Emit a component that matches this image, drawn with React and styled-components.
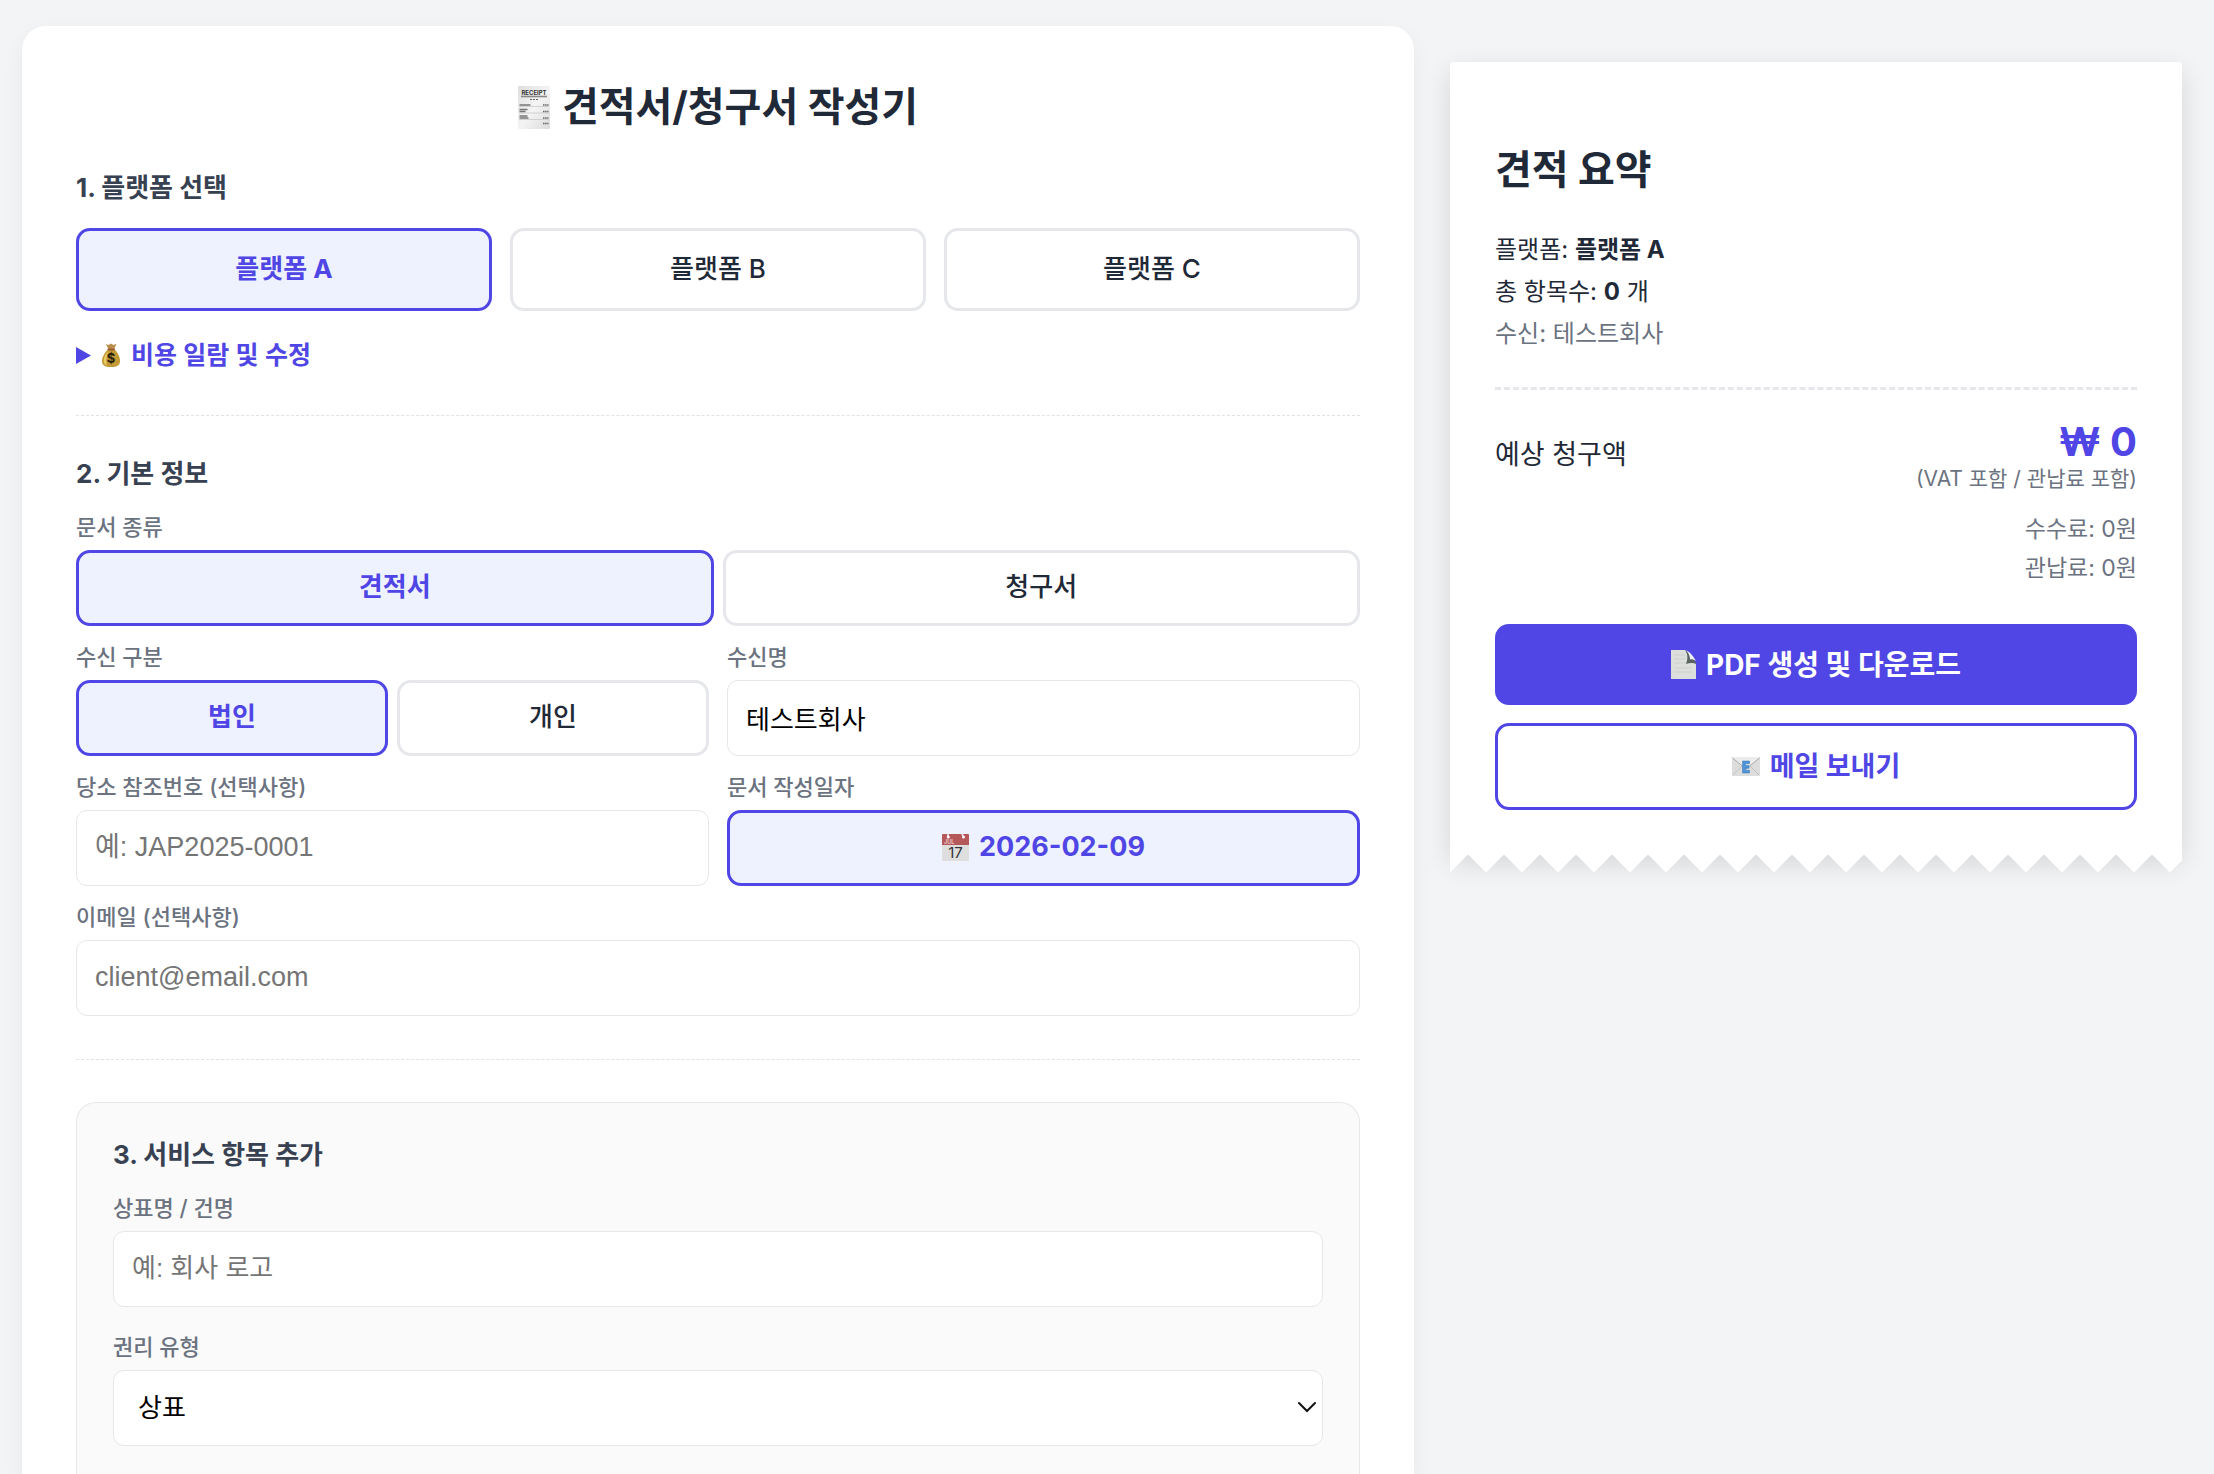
import React, { useState } from 'react'
import styled, { createGlobalStyle } from 'styled-components'

const GlobalStyle = createGlobalStyle`
    * {
        box-sizing: border-box;
    }
    body {
        margin: 0;
        background-color: #f3f4f6;
        color: #1f2937;
        font-family: Inter, "Noto Sans CJK KR", sans-serif;
    }
    button, input, select {
        font-family: inherit;
        margin: 0;
    }
`
const Page = styled.div`
    min-height: 100vh;
    padding: 26px 32px 0 22px;
    display: grid;
    grid-template-columns: minmax(0, 116fr) minmax(0, 61fr);
    gap: 36px;
`
const Card = styled.main`
    display: flex;
    flex-direction: column;
    padding: 54px 54px 0;
    background-color: white;
    border-radius: 24px 24px 0 0;
    box-shadow: 0 7px 22px rgba(0, 0, 0, 0.05);
`
const Title = styled.h1`
    display: flex;
    align-items: center;
    justify-content: center;
    gap: 12px;
    margin: 0 0 38px;
    font-size: 40px;
    line-height: 54px;
    font-weight: 700;
`
const Section = styled.section`
    display: flex;
    flex-direction: column;
`
const SectionTitle = styled.h2`
    margin: 0 0 24px;
    font-size: 26px;
    line-height: 32px;
    font-weight: 700;
    color: #374151;
`
const Divider = styled.hr`
    width: 100%;
    margin: 43px 0 42px;
    border: none;
    border-top: 1px dashed #e0e2e6;
`
const Row = styled.div`
    display: grid;
    grid-template-columns: repeat(${props => props.$cols}, minmax(0, 1fr));
    gap: ${props => props.$gap || 18}px;
`
const Stack = styled.div`
    display: flex;
    flex-direction: column;
    gap: ${props => props.$gap || 18}px;
`
const Field = styled.div`
    display: flex;
    flex-direction: column;
    gap: 9px;
`
const Label = styled.label`
    font-size: 22px;
    line-height: 27px;
    font-weight: 500;
    color: #6b7280;
`
const Option = styled.button`
    display: flex;
    align-items: center;
    justify-content: center;
    gap: 10px;
    height: ${props => (props.$tall ? 83 : 76)}px;
    padding: 0 18px 2px;
    border: 3px solid ${props => (props.$active ? "#4f46e5" : "#e5e7eb")};
    border-radius: 14px;
    background-color: ${props => (props.$active ? "#eef2ff" : "white")};
    color: ${props => (props.$active ? "#4f46e5" : "#1f2937")};
    font-size: ${props => (props.$date ? 27 : 26)}px;
    line-height: 32px;
    font-weight: ${props => (props.$active ? 700 : 500)};
    cursor: pointer;
`
const Input = styled.input`
    width: 100%;
    height: 76px;
    padding: 0 18px 2px;
    border: 1px solid #e5e7eb;
    border-radius: 11px;
    background-color: white;
    color: black;
    font-family: "Liberation Sans", "Noto Sans CJK KR", sans-serif;
    font-size: ${props => (props.$latin ? 27 : 26)}px;

    &::placeholder {
        color: #757575;
    }
`
const SelectBox = styled.div`
    position: relative;
`
const Select = styled.select`
    appearance: none;
    width: 100%;
    height: 76px;
    padding: 0 36px 2px 24px;
    border: 1px solid #e5e7eb;
    border-radius: 11px;
    background-color: white;
    color: black;
    font-size: 26px;
`
const Chevron = styled.svg`
    position: absolute;
    right: 7px;
    top: 31px;
    pointer-events: none;
`
const Costs = styled.details`
    margin: 29px 0 2px;
`
const CostsSummary = styled.summary`
    display: flex;
    align-items: center;
    gap: 11px;
    list-style: none;
    font-size: 25px;
    line-height: 30px;
    font-weight: 600;
    color: #4f46e5;
    cursor: pointer;
`
const Panel = styled.section`
    flex: 1;
    padding: 36px;
    border: 1px solid #e5e7eb;
    border-bottom: none;
    border-radius: 20px 20px 0 0;
    background-color: #fafafa;
`
const Receipt = styled.aside`
    position: relative;
    align-self: start;
    margin-top: 36px;
    padding: 82px 45px 45px;
    background-color: white;
    border-radius: 4px 4px 0 0;
    box-shadow: 0 9px 27px rgba(0, 0, 0, 0.12);

    &::after {
        content: "";
        position: absolute;
        left: 0;
        right: 0;
        top: 100%;
        height: 18px;
        background:
            linear-gradient(45deg, transparent 75%, white 75%) 0 0 / 36px 36px,
            linear-gradient(-45deg, transparent 75%, white 75%) 0 0 / 36px 36px;
    }
`
const ReceiptTitle = styled.h2`
    margin: 0 0 33px;
    font-size: 40px;
    line-height: 52px;
    font-weight: 700;
`
const Line = styled.p`
    margin: 0;
    font-size: 24px;
    line-height: 42px;
    color: ${props => (props.$muted ? "#6b7280" : "#1f2937")};
`
const ReceiptDivider = styled.hr`
    margin: 32px 0 28px;
    border: none;
    border-top: 3px dashed #e5e7eb;
`
const TotalRow = styled.div`
    display: flex;
    align-items: center;
    justify-content: space-between;
`
const TotalLabel = styled.span`
    font-size: 27px;
    line-height: 32px;
`
const TotalValue = styled.div`
    text-align: right;
`
const Price = styled.div`
    font-size: 40px;
    line-height: 48px;
    font-weight: 700;
    color: #4f46e5;
`
const Vat = styled.div`
    font-size: 21px;
    line-height: 26px;
    color: #6b7280;
`
const Fees = styled.div`
    margin: 18px 0 36px;
    text-align: right;
    font-size: 23px;
    line-height: 39px;
    color: #6b7280;
`
const Action = styled.button`
    display: flex;
    align-items: center;
    justify-content: center;
    gap: 10px;
    width: 100%;
    height: ${props => (props.$outline ? 87 : 81)}px;
    border: ${props => (props.$outline ? "3px solid #4f46e5" : "none")};
    border-radius: 14px;
    background-color: ${props => (props.$outline ? "white" : "#4f46e5")};
    color: ${props => (props.$outline ? "#4f46e5" : "white")};
    font-size: ${props => (props.$outline ? 27 : 28)}px;
    line-height: 32px;
    font-weight: 700;
    cursor: pointer;
`

const ReceiptIcon = () => (
    <svg width="32" height="43" viewBox="0 0 32 43" aria-hidden="true">
        <defs>
            <linearGradient id="paper" x1="0" y1="0" x2="1" y2="1">
                <stop offset="0" stopColor="#dedede" />
                <stop offset="0.5" stopColor="#f4f4f4" />
                <stop offset="1" stopColor="#dcdcdc" />
            </linearGradient>
        </defs>
        <rect width="32" height="43" rx="1" fill="url(#paper)" />
        <text x="16" y="9" textAnchor="middle" fontSize="6" fontWeight="700" fill="#333">RECEIPT</text>
        <path d="M3 10.5h26" stroke="#888" strokeWidth="1.6" />
        <path d="M12 13.5h8" stroke="#666" strokeDasharray="2 1" />
        <path d="M1 20.5h30M1 27h30M1 33.5h30" stroke="#c4c4c4" strokeWidth="0.7" />
        <path d="M1.5 19h11M1.5 23.5h8M1.5 25.5h6M1.5 30h8M1.5 32h9" stroke="#777" strokeWidth="1.3" />
        <path d="M25 19h5.5M25 25.5h5.5M25 32h5.5M25 37.5h5.5" stroke="#666" strokeWidth="1.6" strokeDasharray="1.5 0.6" />
    </svg>
)

const MoneyIcon = () => (
    <svg width="18" height="24" viewBox="0 0 18 24" aria-hidden="true">
        <path d="M4 1l2.5 1L9 .5 11.5 2l3-1.2L12 6.500H6.500z" fill="#b98d4b" />
        <path d="M6.5 6H12c3.500 3 6 8 6 12 0 4-2.500 6-9 6s-9-2-9-6C0 14 3 9 6.500 6z" fill="#c39a35" />
        <path d="M6.8 8C3.500 11 1.700 14.500 1.700 18c0 2 1 3.500 3 4C3.500 17 4.500 12 6.800 8z" fill="#e8cd6c" />
        <rect x="5.5" y="5.5" width="7.5" height="2" rx="1" fill="#9c5a2e" />
        <text x="9" y="20" textAnchor="middle" fontSize="13" fontWeight="700" fill="#2a210b">$</text>
    </svg>
)

const CalendarIcon = () => (
    <svg width="27" height="27" viewBox="0 0 27 27" aria-hidden="true">
        <rect width="27" height="27" rx="1" fill="#dedede" />
        <path d="M1 0h25a1 1 0 0 1 1 1v10H0V1a1 1 0 0 1 1-1z" fill="#b4585a" />
        <path d="M6 0v3M20 0l1.5 3" stroke="#eee" strokeWidth="1.5" />
        <circle cx="6.3" cy="3" r="1.5" fill="#fff" />
        <circle cx="21.5" cy="3" r="1.5" fill="#fff" />
        <text x="2" y="9.5" fontSize="5.5" fill="#e8c4c4">JUL</text>
        <text x="13.5" y="24" textAnchor="middle" fontSize="15" fontWeight="400" fill="#333">17</text>
    </svg>
)

const FileIcon = () => (
    <svg width="25" height="29" viewBox="0 0 25 29" aria-hidden="true">
        <path d="M0 0h14c3 2 8 8 11 14v15H0z" fill="#dcdfdb" />
        <path d="M3 5h11M3 9h11M3 13h11M3 18h18M3 22h18" stroke="#cdd1cd" strokeWidth="1" />
        <path d="M14 0c3 4 3 9 1 14 4-1.500 8-1 10 0V13C22 8 18 2 14 0z" fill="#59635f" />
        <path d="M15 0c4 2 8 7 10 11-2-1.500-4-2-6-1.500 0-3-1-6-4-9.500z" fill="#eef0fa" />
    </svg>
)

const MailIcon = () => (
    <svg width="28" height="19" viewBox="0 0 28 19" aria-hidden="true">
        <rect width="28" height="19" rx="1" fill="#dddddd" />
        <path d="M1 18l9-9M27 18l-9-9" stroke="#c2c2c2" />
        <path d="M0 .5L14 12 28 .5V0H0z" fill="#ececec" />
        <path d="M.5 1L14 12 27.5 1" fill="none" stroke="#ababab" />
        <path d="M10.5 4h7v2.8h-4v1.8h3.5v2.6h-3.5v2h4V16h-7z" fill="#4f94d8" stroke="#3878bb" strokeWidth="0.5" />
    </svg>
)

const PLATFORMS = ['플랫폼 A', '플랫폼 B', '플랫폼 C']

const App = () => {
    const [platform, setPlatform] = useState('플랫폼 A')
    const [docType, setDocType] = useState('견적서')
    const [clientType, setClientType] = useState('법인')
    const [client, setClient] = useState('테스트회사')

    return (
        <>
            <GlobalStyle />
            <Page>
                <Card>
                    <Title><ReceiptIcon />견적서/청구서 작성기</Title>
                    <Section>
                        <SectionTitle>1. 플랫폼 선택</SectionTitle>
                        <Row $cols={3}>
                            {PLATFORMS.map(name => (
                                <Option key={name} type="button" $tall $active={platform === name} onClick={() => setPlatform(name)}>
                                    {name}
                                </Option>
                            ))}
                        </Row>
                        <Costs>
                            <CostsSummary>
                                <svg width="15" height="17" viewBox="0 0 15 17" aria-hidden="true">
                                    <path d="M0 0l15 8.5L0 17z" fill="#4f46e5" />
                                </svg>
                                <MoneyIcon />
                                비용 일람 및 수정
                            </CostsSummary>
                        </Costs>
                    </Section>
                    <Divider />
                    <Section>
                        <SectionTitle>2. 기본 정보</SectionTitle>
                        <Stack>
                            <Field>
                                <Label as="span" id="doc-type">문서 종류</Label>
                                <Row $cols={2} $gap={9} role="group" aria-labelledby="doc-type">
                                    {['견적서', '청구서'].map(name => (
                                        <Option key={name} type="button" $active={docType === name} onClick={() => setDocType(name)}>
                                            {name}
                                        </Option>
                                    ))}
                                </Row>
                            </Field>
                            <Row $cols={2}>
                                <Field>
                                    <Label as="span" id="client-type">수신 구분</Label>
                                    <Row $cols={2} $gap={9} role="group" aria-labelledby="client-type">
                                        {['법인', '개인'].map(name => (
                                            <Option key={name} type="button" $active={clientType === name} onClick={() => setClientType(name)}>
                                                {name}
                                            </Option>
                                        ))}
                                    </Row>
                                </Field>
                                <Field>
                                    <Label htmlFor="client">수신명</Label>
                                    <Input id="client" value={client} onChange={e => setClient(e.target.value)} />
                                </Field>
                            </Row>
                            <Row $cols={2}>
                                <Field>
                                    <Label htmlFor="ref-no">당소 참조번호 (선택사항)</Label>
                                    <Input id="ref-no" $latin placeholder="예: JAP2025-0001" />
                                </Field>
                                <Field>
                                    <Label htmlFor="doc-date">문서 작성일자</Label>
                                    <Option id="doc-date" type="button" $active $date><CalendarIcon />2026-02-09</Option>
                                </Field>
                            </Row>
                            <Field>
                                <Label htmlFor="email">이메일 (선택사항)</Label>
                                <Input id="email" type="email" $latin placeholder="client@email.com" />
                            </Field>
                        </Stack>
                    </Section>
                    <Divider />
                    <Panel>
                        <SectionTitle>3. 서비스 항목 추가</SectionTitle>
                        <Stack $gap={27}>
                            <Field>
                                <Label htmlFor="mark">상표명 / 건명</Label>
                                <Input id="mark" placeholder="예: 회사 로고" />
                            </Field>
                            <Field>
                                <Label htmlFor="right-type">권리 유형</Label>
                                <SelectBox>
                                    <Select id="right-type" defaultValue="상표">
                                        <option>상표</option>
                                    </Select>
                                    <Chevron width="18" height="12" viewBox="0 0 18 12" aria-hidden="true">
                                        <path d="M1 2l8 8 8-8" fill="none" stroke="#111" strokeWidth="2" strokeLinecap="round" />
                                    </Chevron>
                                </SelectBox>
                            </Field>
                        </Stack>
                    </Panel>
                </Card>
                <Receipt>
                    <ReceiptTitle>견적 요약</ReceiptTitle>
                    <Line>플랫폼: <b>{platform}</b></Line>
                    <Line>총 항목수: <b>0</b> 개</Line>
                    <Line $muted>수신: {client}</Line>
                    <ReceiptDivider />
                    <TotalRow>
                        <TotalLabel>예상 청구액</TotalLabel>
                        <TotalValue>
                            <Price>₩ 0</Price>
                            <Vat>(VAT 포함 / 관납료 포함)</Vat>
                        </TotalValue>
                    </TotalRow>
                    <Fees>
                        <div>수수료: 0원</div>
                        <div>관납료: 0원</div>
                    </Fees>
                    <Stack>
                        <Action type="button"><FileIcon />PDF 생성 및 다운로드</Action>
                        <Action type="button" $outline><MailIcon />메일 보내기</Action>
                    </Stack>
                </Receipt>
            </Page>
        </>
    )
}

export default App
